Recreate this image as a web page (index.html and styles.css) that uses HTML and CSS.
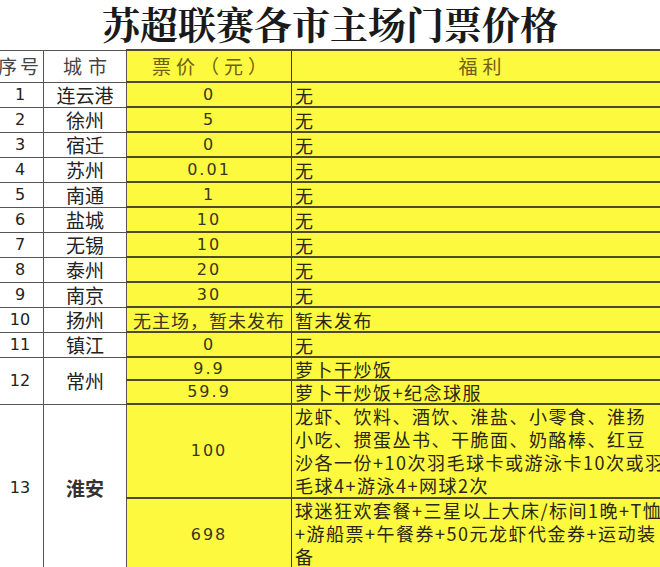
FILE: index.html
```html
<!DOCTYPE html>
<html lang="zh">
<head>
<meta charset="utf-8">
<title>苏超联赛各市主场门票价格</title>
<link rel="stylesheet" href="styles.css">
</head>
<body>
<div class="page">
  <h1 class="title">苏超联赛各市主场门票价格</h1>
  <table class="sheet">
    <colgroup>
      <col class="c-no"><col class="c-city"><col class="c-price"><col class="c-perk">
    </colgroup>
    <tr class="head">
      <td class="w hd hno">序号</td>
      <td class="w hd">城市</td>
      <td class="y hd hy">票价（元）</td>
      <td class="y hd hy">福利</td>
    </tr>
    <tr class="r"><td class="w num">1</td><td class="w city">连云港</td><td class="y price">0</td><td class="y perk">无</td></tr>
    <tr class="r"><td class="w num">2</td><td class="w city">徐州</td><td class="y price">5</td><td class="y perk">无</td></tr>
    <tr class="r"><td class="w num">3</td><td class="w city">宿迁</td><td class="y price">0</td><td class="y perk">无</td></tr>
    <tr class="r"><td class="w num">4</td><td class="w city">苏州</td><td class="y price">0.01</td><td class="y perk">无</td></tr>
    <tr class="r"><td class="w num">5</td><td class="w city">南通</td><td class="y price">1</td><td class="y perk">无</td></tr>
    <tr class="r"><td class="w num">6</td><td class="w city">盐城</td><td class="y price">10</td><td class="y perk">无</td></tr>
    <tr class="r"><td class="w num">7</td><td class="w city">无锡</td><td class="y price">10</td><td class="y perk">无</td></tr>
    <tr class="r"><td class="w num">8</td><td class="w city">泰州</td><td class="y price">20</td><td class="y perk">无</td></tr>
    <tr class="r"><td class="w num">9</td><td class="w city">南京</td><td class="y price">30</td><td class="y perk">无</td></tr>
    <tr class="r"><td class="w num">10</td><td class="w city">扬州</td><td class="y price cjk">无主场，暂未发布</td><td class="y perk">暂未发布</td></tr>
    <tr class="r"><td class="w num">11</td><td class="w city">镇江</td><td class="y price">0</td><td class="y perk">无</td></tr>
    <tr class="r12a"><td class="w num" rowspan="2">12</td><td class="w city" rowspan="2">常州</td><td class="y price">9.9</td><td class="y perk">萝卜干炒饭</td></tr>
    <tr class="r12b"><td class="y price">59.9</td><td class="y perk">萝卜干炒饭+纪念球服</td></tr>
    <tr class="r13a"><td class="w num" rowspan="2">13</td><td class="w city strong" rowspan="2">淮安</td><td class="y price">100</td><td class="y perk long">龙虾、饮料、酒饮、淮盐、小零食、淮扬<br>小吃、掼蛋丛书、干脆面、奶酪棒、红豆<br>沙各一份+10次羽毛球卡或游泳卡10次或羽<br>毛球4+游泳4+网球2次</td></tr>
    <tr class="r13b"><td class="y price">698</td><td class="y perk long">球迷狂欢套餐+三星以上大床/标间1晚+T恤<br>+游船票+午餐券+50元龙虾代金券+运动装<br>备</td></tr>
  </table>
</div>
</body>
</html>
```

FILE: styles.css
```css
html, body {
  margin: 0;
  padding: 0;
  background: #ffffff;
}
body {
  width: 660px;
  height: 567px;
  overflow: hidden;
  font-family: "Noto Sans CJK SC", "Noto Sans", sans-serif;
  color: #222;
}
.page {
  width: 660px;
}
.title {
  margin: 0;
  height: 49px;
  line-height: 46px;
  text-align: center;
  font-family: "Noto Serif CJK SC", "Noto Sans CJK SC", serif;
  font-size: 38px;
  font-weight: 700;
  color: #1a1a1a;
  letter-spacing: 0;
}
.sheet {
  border-collapse: collapse;
  table-layout: fixed;
  width: 675px;
  margin-left: -8px;
}
.c-no { width: 51px; }
.c-city { width: 83px; }
.c-price { width: 165px; }
.c-perk { width: 376px; }

.sheet td {
  padding: 0;
  border: 1px solid #555;
  vertical-align: middle;
  white-space: nowrap;
  overflow: hidden;
  line-height: 20px;
}
.sheet td.y {
  background: #fdf93f;
  border-top: 2px solid #4d4a2c;
  border-bottom: 2px solid #4d4a2c;
  border-left: 1px solid #3d3a25;
  border-right: 1px solid #3d3a25;
}
.head td { height: 30px; }
.r td { height: 23px; }
.r12a td { height: 21px; }
.r12b td { height: 22px; }
.r13a td { height: 92px; }
.r13b td { height: 71px; }

.hd {
  text-align: center;
  font-size: 19px;
  letter-spacing: 6px;
  color: #444;
  padding-left: 6px !important;
}
.hno {
  text-align: left;
  letter-spacing: 3px;
  padding-left: 5px !important;
}
.hy {
  color: #6e5f12;
  letter-spacing: 5px;
}
.num {
  text-align: center;
  font-family: "DejaVu Sans", "Noto Sans", sans-serif;
  font-size: 16px;
  color: #222;
  padding-left: 4px !important;
}
.city {
  text-align: center;
  font-size: 19px;
  color: #222;
}
.city.strong {
  font-weight: 700;
  color: #333;
}
.price {
  text-align: center;
  font-family: "DejaVu Sans", "Noto Sans CJK SC", sans-serif;
  font-size: 16px;
  letter-spacing: 2px;
  color: #3a3520;
}
.price.cjk {
  font-family: "Noto Sans CJK SC", sans-serif;
  font-size: 18px;
  letter-spacing: 1px;
}
.perk {
  text-align: left;
  padding-left: 3px !important;
  font-size: 18px;
  letter-spacing: 1.5px;
  color: #2a2718;
}
.perk.long {
  vertical-align: top;
  line-height: 23px;
}
```
